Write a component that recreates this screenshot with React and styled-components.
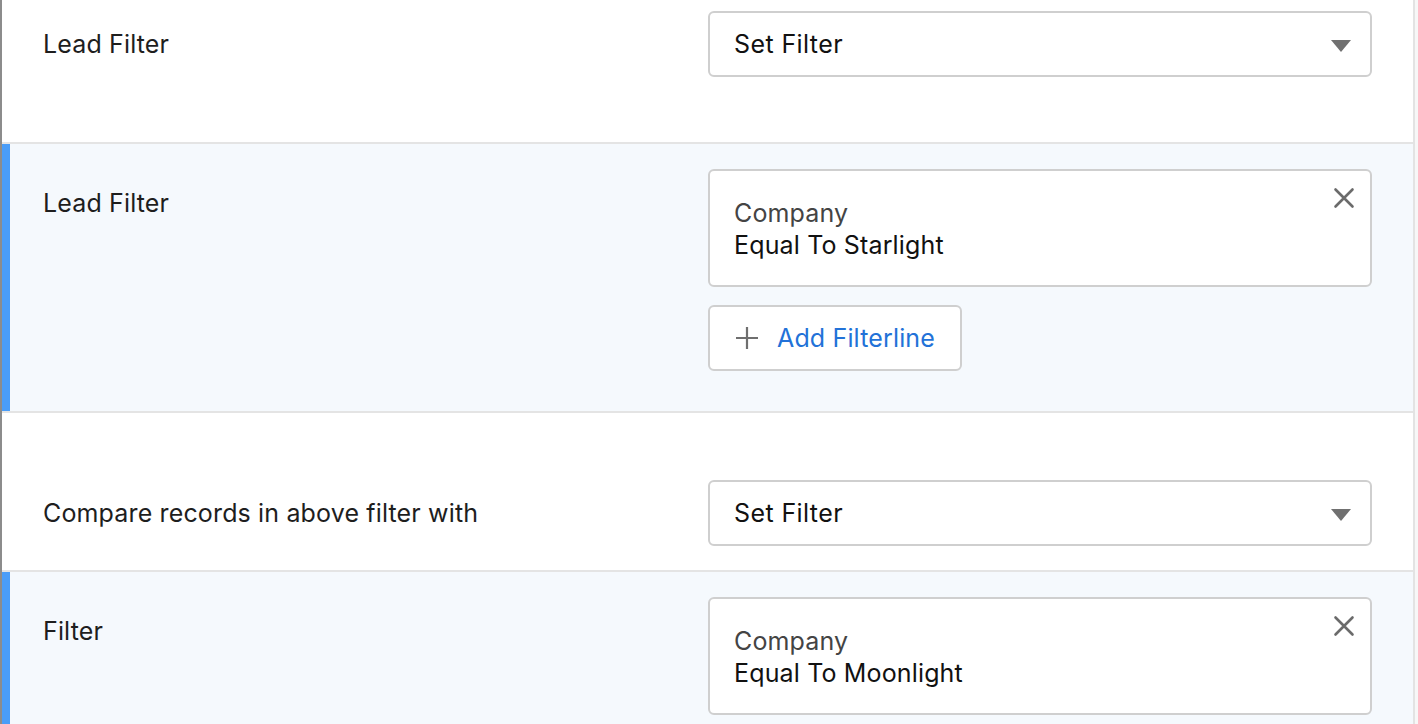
import React from 'react';
import styled, { createGlobalStyle } from 'styled-components';

const GlobalStyle = createGlobalStyle`
  html, body {
    margin: 0;
    padding: 0;
  }
  body {
    font-family: Inter, "Open Sans", sans-serif;
    color: #1c1c1c;
    -webkit-font-smoothing: antialiased;
  }
`;

const Page = styled.div`
  display: flex;
  min-height: 100vh;
  background-color: #f7f7f7;
  border-left: 2px solid #8c8c8c;
`;

const Panel = styled.div`
  width: 1411px;
  background-color: #ffffff;
  border-right: 2px solid #e3e3e3;
`;

const Section = styled.section`
  display: grid;
  grid-template-columns: 1fr 664px;
  align-items: ${(props) => (props.active ? 'start' : 'center')};
  padding: ${(props) => props.pad || '25px 41px 40px 41px'};
  background-color: ${(props) => (props.active ? '#f5f9fd' : '#ffffff')};
  box-shadow: ${(props) => (props.active ? 'inset 8px 0 0 #4a9df8' : 'none')};
  border-bottom: 2px solid #e4e4e4;
`;

const Label = styled.div`
  font-size: 25px;
  line-height: 32px;
  letter-spacing: 0.15px;
  color: #1e1e1e;
  margin-top: ${(props) => props.offset || 0}px;
`;

const Field = styled.div`
  display: flex;
  flex-direction: column;
  align-items: flex-start;
`;

const Select = styled.div`
  position: relative;
  display: flex;
  align-items: center;
  width: 100%;
  height: 66px;
  box-sizing: border-box;
  padding: 0 24px;
  background-color: #ffffff;
  border: 2px solid #cfcfcf;
  border-radius: 6px;
  font-size: 25px;
  letter-spacing: 0.4px;
  color: #111;
`;

const Caret = styled.span`
  position: absolute;
  right: 19px;
  top: 27px;
  width: 0;
  height: 0;
  border-left: 10px solid transparent;
  border-right: 10px solid transparent;
  border-top: 12px solid #707070;
`;

const Card = styled.div`
  position: relative;
  width: 100%;
  box-sizing: border-box;
  padding: 26px 24px 24px;
  background-color: #ffffff;
  border: 2px solid #cfcfcf;
  border-radius: 6px;
  font-size: 25px;
  line-height: 32px;
  letter-spacing: 0.15px;
`;

const FieldName = styled.div`
  color: #444444;
`;

const FieldValue = styled.div`
  color: #111111;
`;

const CloseButton = styled.button`
  position: absolute;
  top: 16px;
  right: 15px;
  display: flex;
  padding: 0;
  border: none;
  background: transparent;
  cursor: pointer;
`;

const AddButton = styled.button`
  display: flex;
  align-items: center;
  gap: 18px;
  margin-top: 18px;
  height: 66px;
  box-sizing: border-box;
  padding: 0 25px 0 25px;
  background-color: #ffffff;
  border: 2px solid #cfcfcf;
  border-radius: 6px;
  font-family: inherit;
  font-size: 25px;
  letter-spacing: 0.15px;
  color: #2272d8;
  cursor: pointer;
`;

const CloseIcon = () => (
  <svg width="22" height="22" viewBox="0 0 22 22">
    <path
      d="M2.5 2.5L19.5 19.5M19.5 2.5L2.5 19.5"
      stroke="#6b6b6b"
      strokeWidth="2.6"
      strokeLinecap="round"
    />
  </svg>
);

const PlusIcon = () => (
  <svg width="24" height="24" viewBox="0 0 24 24">
    <path d="M12 1V23M1 12H23" stroke="#6f6f6f" strokeWidth="2.2" />
  </svg>
);

const FilterCard = ({ name, value }) => (
  <Card>
    <FieldName>{name}</FieldName>
    <FieldValue>{value}</FieldValue>
    <CloseButton aria-label="Remove">
      <CloseIcon />
    </CloseButton>
  </Card>
);

const SetFilter = () => (
  <Select>
    Set Filter
    <Caret />
  </Select>
);

export default function App() {
  return (
    <>
      <GlobalStyle />
      <Page>
        <Panel>
          <Section pad="11px 41px 65px 41px">
            <Label>Lead Filter</Label>
            <Field>
              <SetFilter />
            </Field>
          </Section>

          <Section active>
            <Label offset={18}>Lead Filter</Label>
            <Field>
              <FilterCard name="Company" value="Equal To Starlight" />
              <AddButton>
                <PlusIcon />
                Add Filterline
              </AddButton>
            </Field>
          </Section>

          <Section pad="67px 41px 24px 41px">
            <Label>Compare records in above filter with</Label>
            <Field>
              <SetFilter />
            </Field>
          </Section>

          <Section active>
            <Label offset={18}>Filter</Label>
            <Field>
              <FilterCard name="Company" value="Equal To Moonlight" />
            </Field>
          </Section>
        </Panel>
      </Page>
    </>
  );
}
